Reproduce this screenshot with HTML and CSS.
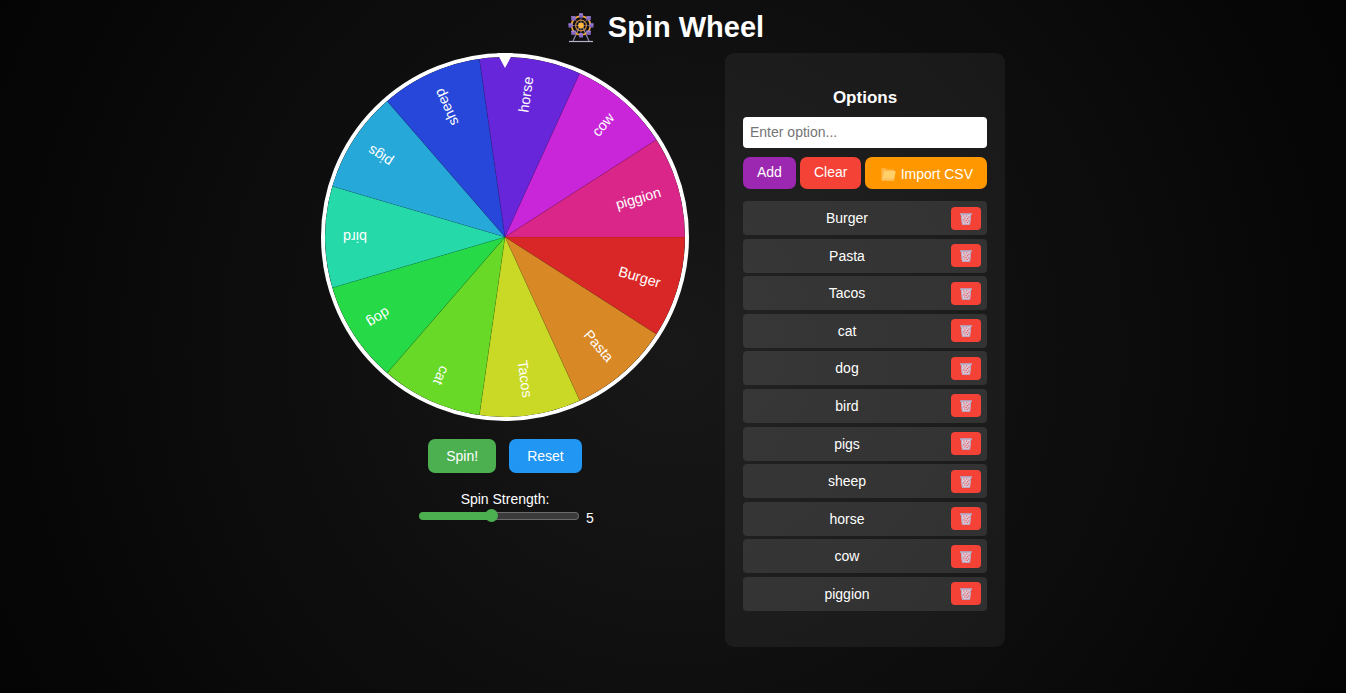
FILE: index.html
```html
<!DOCTYPE html>
<html lang="en">
<head>
  <meta charset="UTF-8">
  <meta name="viewport" content="width=device-width, initial-scale=1.0">
  <title>Spin Wheel</title>
  <link rel="stylesheet" href="styles.css">
</head>
<body>
<h1 class="title">
  <svg class="title-icon" viewBox="0 0 28 30" aria-hidden="true">
    <path d="M12 15 L6 28 M16 15 L22 28" stroke="#8f86a8" stroke-width="1.2"/>
    <path d="M2 28.5 H26" stroke="#b9b3c9" stroke-width="1.2"/>
    <path d="M14 3V22M4 12.5H24M7 5.5L21 19.5M21 5.5L7 19.5" stroke="#6a5488" stroke-width="1"/>
    <circle cx="14" cy="12.5" r="9.4" fill="none" stroke="#f0a93a" stroke-width="1.7"/>
    <circle cx="14" cy="12.5" r="5.4" fill="none" stroke="#c98a35" stroke-width="1.2"/>
    <g fill="#8567c4">
      <rect x="12" y="0.5" width="4" height="4"/>
      <rect x="12" y="20.5" width="4" height="4"/>
      <rect x="1.5" y="10.5" width="4" height="4"/>
      <rect x="22.5" y="10.5" width="4" height="4"/>
      <rect x="4.2" y="3.4" width="4.4" height="4"/>
      <rect x="19.4" y="3.4" width="4.4" height="4"/>
      <rect x="4.2" y="17.8" width="4.4" height="4"/>
      <rect x="19.4" y="17.8" width="4.4" height="4"/>
    </g>
    <path d="M12 1h4M12 21h4M1.5 11h4M22.5 11h4M4.2 3.9h4.4M19.4 3.9h4.4M4.2 18.3h4.4M19.4 18.3h4.4" stroke="#a78fdc" stroke-width="1"/>
    <circle cx="14" cy="12.5" r="2.9" fill="#ffb83d"/>
  </svg>
  <span>Spin Wheel</span>
</h1>

<div class="container">
  <div class="wheel-section">
    <div class="wheel-box">
      <svg id="wheel" class="wheel" viewBox="0 0 400 400"></svg>
      <div class="pointer"></div>
    </div>
    <div class="controls">
      <button id="spinBtn" class="btn btn-spin" type="button">Spin!</button>
      <button id="resetBtn" class="btn btn-reset" type="button">Reset</button>
    </div>
    <div class="strength">
      <label for="strength">Spin Strength:</label>
      <div class="strength-row">
        <input id="strength" class="strength-range" type="range" min="1" max="10" value="5">
        <span id="strengthValue">5</span>
      </div>
    </div>
  </div>

  <div class="options">
    <h3 class="options-title">Options</h3>
    <input id="optionInput" class="option-input" type="text" placeholder="Enter option..." aria-label="Enter option">
    <div class="option-buttons">
      <button id="addBtn" class="btn-small btn-add" type="button">Add</button>
      <button id="clearBtn" class="btn-small btn-clear" type="button">Clear</button>
      <button class="btn-small btn-import" type="button">
        <svg class="folder-icon" viewBox="0 0 15 13" aria-hidden="true">
          <path d="M0.4 1 Q0.4 0.3 1.1 0.3 H4.6 L6 1.6 H12.2 Q13 1.6 13 2.4 V12 H0.4Z" fill="#ffb74a"/>
          <path d="M4 3 H14 Q14.8 3 14.6 3.8 L13.2 11.6 Q13 12.6 12.2 12.6 H1 L3.2 3.6 Q3.4 3 4 3Z" fill="#ffd06a"/>
          <path d="M1.6 10.6 H13.4 L13.2 11.6 Q13 12.6 12.2 12.6 H1Z" fill="#ffbe5c"/>
        </svg>
        <span>Import CSV</span>
      </button>
    </div>
    <ul id="optionList" class="option-list"></ul>
  </div>
</div>

<script>
  var options = ["Burger", "Pasta", "Tacos", "cat", "dog", "bird", "pigs", "sheep", "horse", "cow", "piggion"];
  var rotation = 0;

  var wheel = document.getElementById("wheel");
  var list = document.getElementById("optionList");
  var input = document.getElementById("optionInput");
  var strength = document.getElementById("strength");

  var trashIcon = '<svg class="trash-icon" viewBox="0 0 12 12" aria-hidden="true">' +
    '<path d="M0.8 0.8 H11.2 L10 11.8 H2Z" fill="#dccbd9"/>' +
    '<path d="M3.2 3h1.2M6 3h1.2M8.4 4.2h1.2M4.4 5h1.2M7 5.6h1.2M3.2 6.8h1.2M5.6 7.4h1.2M8 8h1.2M4.2 9h1.2M6.6 9.4h1.2" stroke="#e5505a" stroke-width="1.2"/>' +
    '<path d="M0 1 H12" stroke="#b3a6c2" stroke-width="1.6"/>' +
    '<path d="M1.3 2 L2.5 11.3 H9.5 L10.7 2" fill="none" stroke="#b3a6c2" stroke-width="1"/></svg>';

  // draw the slices, each label is right aligned 20 from the rim
  function drawWheel() {
    var html = "";
    var arc = 360 / options.length;
    for (var i = 0; i < options.length; i++) {
      var a = i * arc * Math.PI / 180;
      var b = (i + 1) * arc * Math.PI / 180;
      html += '<path class="slice" fill="hsl(' + (i * arc) + ', 70%, 50%)" d="M200 200 L' +
        (200 + 200 * Math.cos(a)) + ' ' + (200 + 200 * Math.sin(a)) + ' A200 200 0 0 1 ' +
        (200 + 200 * Math.cos(b)) + ' ' + (200 + 200 * Math.sin(b)) + 'Z"/>';
    }
    for (var j = 0; j < options.length; j++) {
      html += '<text class="slice-label" x="380" y="206" transform="rotate(' + ((j + 0.5) * arc) + ' 200 200)">' +
        options[j] + '</text>';
    }
    wheel.innerHTML = html;
  }

  function drawList() {
    list.innerHTML = "";
    options.forEach(function (name, index) {
      var li = document.createElement("li");
      var span = document.createElement("span");
      var btn = document.createElement("button");
      li.className = "option-item";
      span.className = "option-name";
      span.textContent = name;
      btn.className = "btn-delete";
      btn.type = "button";
      btn.setAttribute("aria-label", "Delete " + name);
      btn.innerHTML = trashIcon;
      btn.onclick = function () {
        options.splice(index, 1);
        update();
      };
      li.appendChild(span);
      li.appendChild(btn);
      list.appendChild(li);
    });
  }

  function update() {
    drawWheel();
    drawList();
  }

  // the green part of the track ends under the thumb
  function showStrength() {
    strength.style.setProperty("--fill", (strength.value - 1) / 9 * 100 + "%");
    document.getElementById("strengthValue").textContent = strength.value;
  }

  document.getElementById("addBtn").onclick = function () {
    if (input.value.trim()) {
      options.push(input.value.trim());
      input.value = "";
      update();
    }
  };
  document.getElementById("clearBtn").onclick = function () {
    options = [];
    update();
  };
  document.getElementById("spinBtn").onclick = function () {
    rotation += strength.value * 360 + Math.random() * 360;
    wheel.style.transform = "rotate(" + rotation + "deg)";
  };
  document.getElementById("resetBtn").onclick = function () {
    rotation = 0;
    wheel.style.transform = "";
  };
  strength.oninput = showStrength;

  update();
  showStrength();
</script>
</body>
</html>
```

FILE: styles.css
```css
* {
  box-sizing: border-box;
}

body {
  margin: 0;
  padding: 11px 15px 10px 0;
  min-height: 100vh;
  background: radial-gradient(circle, #181818, #040404);
  color: #fff;
  font-family: "Liberation Sans", Arial, sans-serif;
  font-size: 14px;
  text-align: center;
}

button,
input {
  font-family: inherit;
  font-size: 14px;
}

button {
  border: none;
  color: #fff;
  cursor: pointer;
}

.title {
  display: flex;
  justify-content: center;
  align-items: center;
  gap: 13px;
  margin: 0 0 9px;
  font-size: 29px;
  line-height: 33px;
}

.title-icon {
  width: 28px;
  height: 30px;
}

.container {
  display: flex;
  flex-wrap: wrap;
  justify-content: center;
  align-items: flex-start;
  gap: 36px;
  padding-right: 5px;
}

.wheel-box {
  position: relative;
  width: 368px;
  border: 4px solid #fff;
  border-radius: 50%;
}

.wheel {
  display: block;
  width: 100%;
  border-radius: 50%;
  transition: transform 4s ease-out;
}

.slice {
  stroke: rgba(0, 0, 0, 0.08);
  stroke-width: 1;
}

.slice-label {
  fill: #fff;
  font-size: 16px;
  text-anchor: end;
}

.pointer {
  position: absolute;
  top: -4px;
  left: 50%;
  margin-left: -8px;
  border-left: 8px solid transparent;
  border-right: 8px solid transparent;
  border-top: 15px solid #fff;
}

.controls {
  display: flex;
  justify-content: center;
  gap: 13px;
  margin: 18px 0;
}

.btn {
  padding: 9px 18px;
  line-height: 16px;
  border-radius: 7px;
}

.btn-spin {
  background: #4caf50;
}

.btn-reset {
  background: #2196f3;
}

.strength {
  line-height: 16px;
}

.strength-row {
  display: flex;
  justify-content: center;
  gap: 7px;
  padding-left: 3px;
}

.strength-range {
  -webkit-appearance: none;
  appearance: none;
  width: 160px;
  height: 18px;
  margin: 0;
  background: transparent;
}

.strength-range::-webkit-slider-runnable-track {
  height: 8px;
  border: 1px solid transparent;
  border-radius: 4px;
  background:
    linear-gradient(#4caf50, #4caf50) 0 0 / var(--fill) 100% no-repeat border-box,
    linear-gradient(#3b3b3b, #3b3b3b) padding-box,
    linear-gradient(#6b6b6b, #6b6b6b) border-box;
}

.strength-range::-webkit-slider-thumb {
  -webkit-appearance: none;
  width: 13px;
  height: 13px;
  margin-top: -4px;
  border-radius: 50%;
  background: #4caf50;
}

.strength-row span {
  padding-top: 3px;
}

.options {
  width: 280px;
  padding: 35px 18px 36px;
  border-radius: 9px;
  background: rgba(255, 255, 255, 0.05);
}

.options-title {
  margin: 0 0 9px;
  font-size: 17px;
  line-height: 20px;
}

.option-input {
  display: block;
  width: 100%;
  height: 31px;
  padding: 0 7px 2px;
  border: none;
  border-radius: 4px;
}

.option-buttons {
  display: flex;
  gap: 4px;
  margin: 9px 0 12px;
}

.btn-small {
  padding: 7px 14px 9px;
  line-height: 16px;
  border-radius: 7px;
}

.btn-add {
  background: #9c27b0;
}

.btn-clear {
  background: #f44336;
}

.btn-import {
  display: flex;
  flex: 1;
  justify-content: flex-end;
  align-items: center;
  gap: 5px;
  padding: 9px 14px 7px;
  background: #ff9800;
}

.folder-icon {
  width: 15px;
  height: 13px;
}

.option-list {
  display: flex;
  flex-direction: column;
  justify-content: space-between;
  min-height: 410px;
  margin: 0;
  padding: 0;
  list-style: none;
}

.option-item {
  display: flex;
  align-items: center;
  gap: 6px;
  height: 34px;
  padding: 0 6px;
  border-radius: 4px;
  background: rgba(255, 255, 255, 0.1);
}

.option-name {
  flex: 1;
}

.btn-delete {
  display: flex;
  justify-content: center;
  align-items: center;
  width: 30px;
  height: 23px;
  padding: 1px 0 0;
  border-radius: 4px;
  background: #f44336;
}

.trash-icon {
  width: 12px;
  height: 12px;
}
```
